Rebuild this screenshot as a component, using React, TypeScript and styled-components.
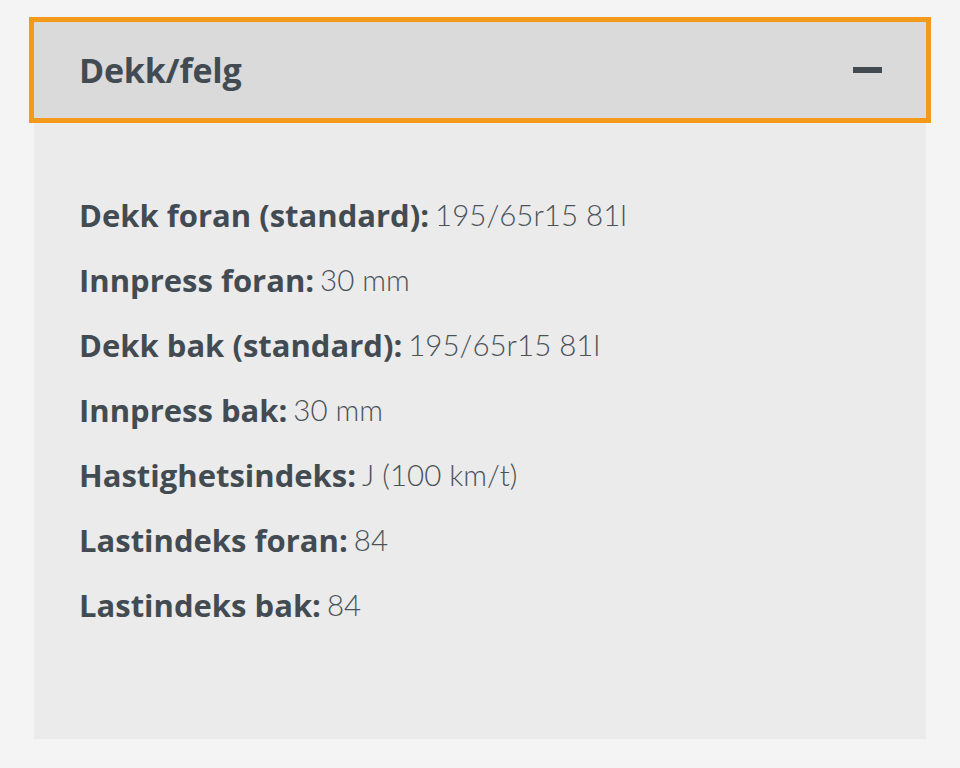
import styled, { createGlobalStyle } from "styled-components";

const GlobalStyle = createGlobalStyle`
  html, body {
    margin: 0;
    padding: 0;
    background: #f4f4f4;
  }
  body {
    font-family: "Open Sans", Lato, sans-serif;
    color: #434b52;
  }
`;

const Page = styled.div`
  padding: 22px 34px 29px;
`;

const Panel = styled.section`
  background: #ebebeb;
  min-height: 717px;
  display: flex;
  flex-direction: column;
`;

const Header = styled.button`
  all: unset;
  box-sizing: border-box;
  display: flex;
  align-items: center;
  justify-content: space-between;
  height: 96px;
  padding: 0 44px 0 45px;
  background: #dadada;
  outline: 5px solid #f39a1b;
  cursor: pointer;
`;

const Title = styled.h2`
  margin: 0;
  font-family: "Open Sans", sans-serif;
  font-size: 34px;
  font-weight: 700;
  letter-spacing: -0.2px;
  color: #434b52;
`;

const Minus = styled.span`
  width: 29px;
  height: 6px;
  background: #434b52;
`;

const Body = styled.dl`
  margin: 0;
  padding: 64px 45px 0;
  display: flex;
  flex-direction: column;
`;

const Row = styled.div`
  height: 65px;
  display: flex;
  align-items: center;
`;

const Label = styled.dt`
  font-family: "Open Sans", sans-serif;
  font-size: 31px;
  font-weight: 700;
  margin-right: 6px;
`;

const Value = styled.dd`
  margin: 0;
  font-family: Lato, sans-serif;
  font-size: 29.5px;
  font-weight: 300;
  color: #4a5258;
`;

const specs: [string, string][] = [
  ["Dekk foran (standard):", "195/65r15 81l"],
  ["Innpress foran:", "30 mm"],
  ["Dekk bak (standard):", "195/65r15 81l"],
  ["Innpress bak:", "30 mm"],
  ["Hastighetsindeks:", "J (100 km/t)"],
  ["Lastindeks foran:", "84"],
  ["Lastindeks bak:", "84"],
];

export default function App() {
  return (
    <>
      <GlobalStyle />
      <Page>
        <Panel>
          <Header>
            <Title>Dekk/felg</Title>
            <Minus />
          </Header>
          <Body>
            {specs.map(([label, value]) => (
              <Row key={label}>
                <Label>{label}</Label>
                <Value>{value}</Value>
              </Row>
            ))}
          </Body>
        </Panel>
      </Page>
    </>
  );
}
